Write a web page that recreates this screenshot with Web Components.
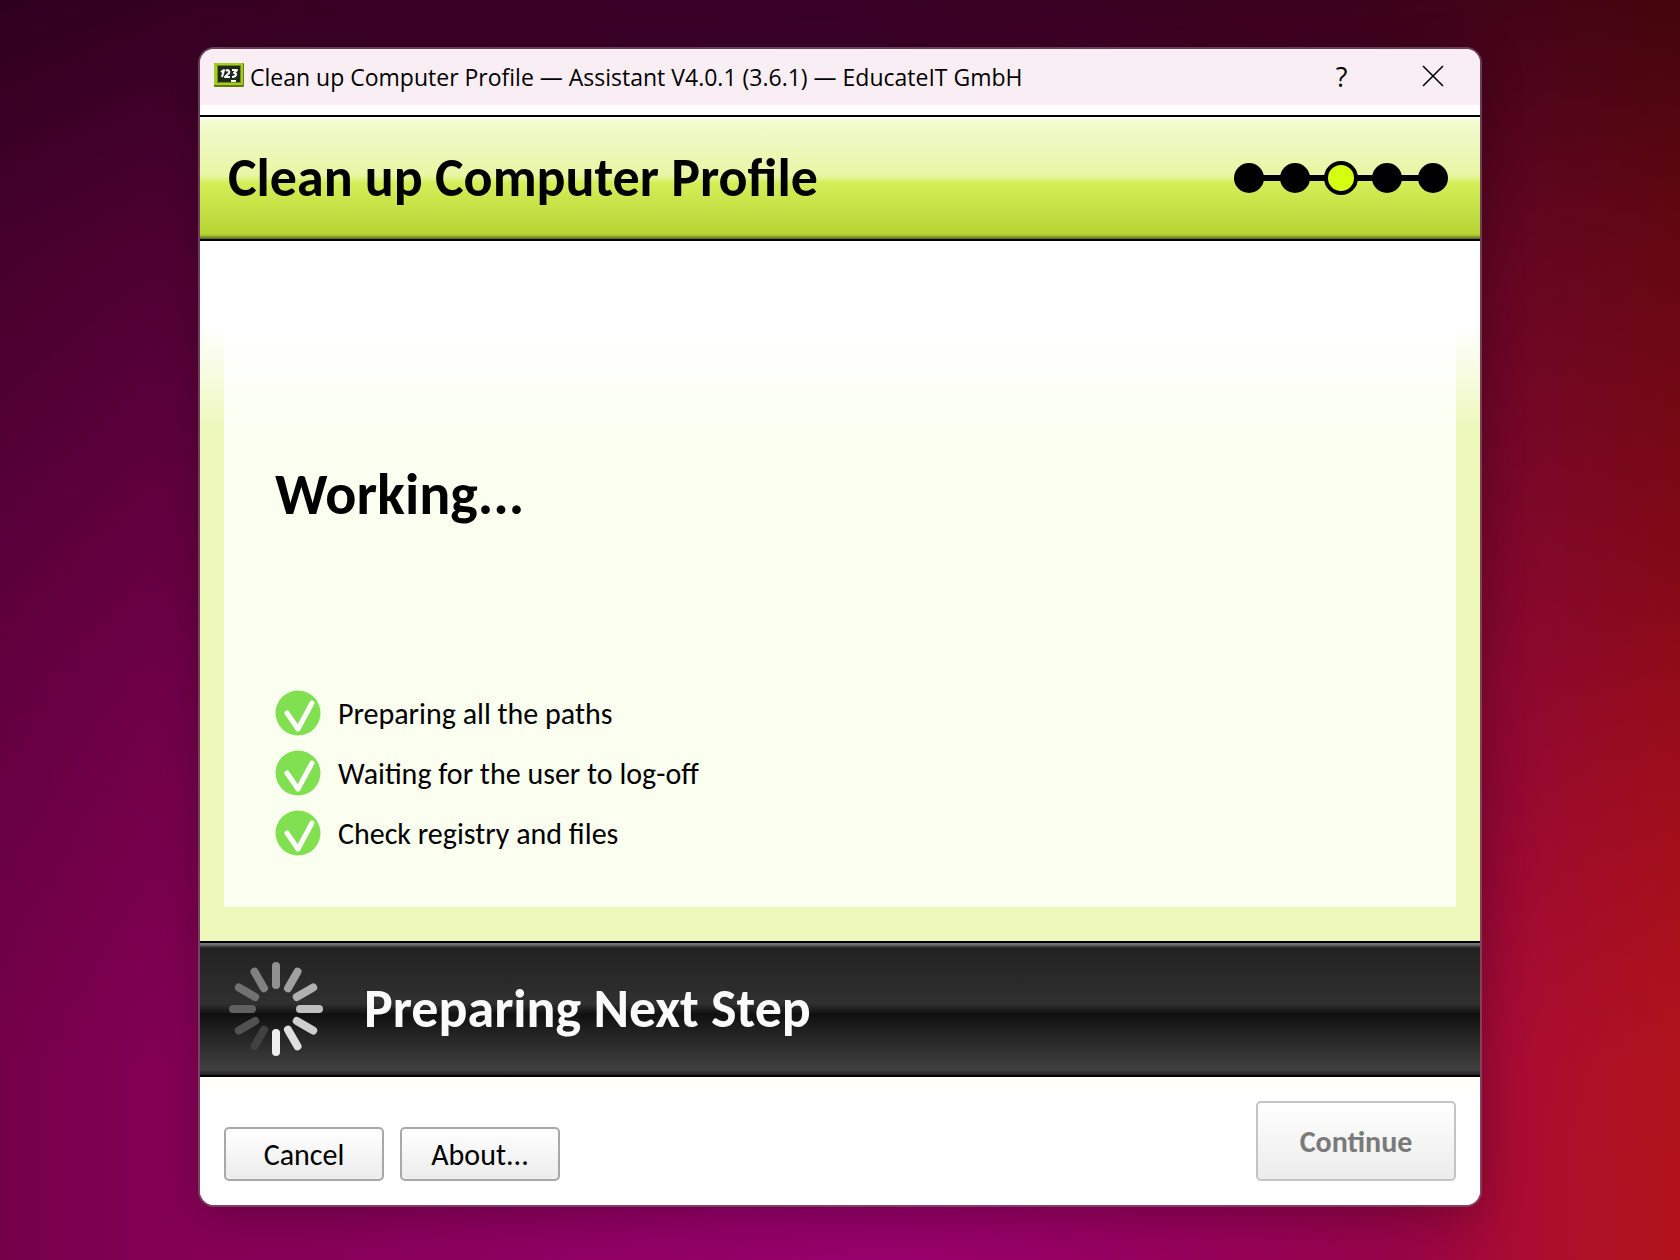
<!DOCTYPE html>
<html lang="en">
<head>
<meta charset="utf-8">
<title>Clean up Computer Profile</title>
<style>
    body {
        margin: 0;
        font-family: Carlito, Lato, "Open Sans", sans-serif;
        color: #000;
    }
</style>
</head>
<body>
<app-desktop>
    <assistant-window>
        <title-bar slot="title">Clean up Computer Profile — Assistant V4.0.1 (3.6.1) — EducateIT GmbH</title-bar>
        <page-header slot="header">
            Clean up Computer Profile
            <step-dots slot="steps" total="5" current="3"></step-dots>
        </page-header>
        <work-panel heading="Working...">
            <task-item>Preparing all the paths</task-item>
            <task-item>Waiting for the user to log-off</task-item>
            <task-item>Check registry and files</task-item>
        </work-panel>
        <busy-bar slot="status">Preparing Next Step</busy-bar>
        <button-row slot="footer">
            <push-button>Cancel</push-button>
            <push-button>About...</push-button>
            <push-button slot="primary" primary disabled>Continue</push-button>
        </button-row>
    </assistant-window>
</app-desktop>

<script>
class AppDesktop extends HTMLElement {
    constructor() {
        super();
        this.attachShadow({mode: 'open'});
    }

    connectedCallback() {
        this.shadowRoot.innerHTML = `
            <style>
                :host {
                    display: flex;
                    box-sizing: border-box;
                    min-height: 100vh;
                    padding: 47px 198px 53px;
                    background:
                        radial-gradient(ellipse 34% 14% at 54% 100%, rgba(156, 0, 112, 0.7), transparent),
                        radial-gradient(ellipse 16% 50% at 102% 96%, rgba(184, 24, 28, 0.7), transparent),
                        linear-gradient(to bottom, rgba(0, 0, 0, 0.6), rgba(0, 0, 0, 0.4) 20%, rgba(0, 0, 0, 0.15) 55%, transparent 85%),
                        linear-gradient(to right, #74004a, #860056 12%, #8c0060 50%, #940444 82%, #a80a34 92%, #a80c1c);
                }
            </style>
            <slot></slot>
        `;
    }
}
customElements.define('app-desktop', AppDesktop);

class AssistantWindow extends HTMLElement {
    constructor() {
        super();
        this.attachShadow({mode: 'open'});
    }

    connectedCallback() {
        this.shadowRoot.innerHTML = `
            <style>
                :host {
                    display: flex;
                    flex-direction: column;
                    flex: 1;
                    min-width: 0;
                    border: 2px solid rgba(128, 96, 112, 0.65);
                    border-radius: 16px;
                    overflow: hidden;
                    background: #fff;
                    background-clip: padding-box;
                    box-shadow: 0 8px 40px rgba(0, 0, 0, 0.25);
                }

                main {
                    display: flex;
                    flex: 1;
                }
            </style>
            <slot name="title"></slot>
            <slot name="header"></slot>
            <main><slot></slot></main>
            <slot name="status"></slot>
            <slot name="footer"></slot>
        `;
    }
}
customElements.define('assistant-window', AssistantWindow);

class TitleBar extends HTMLElement {
    constructor() {
        super();
        this.attachShadow({mode: 'open'});
    }

    connectedCallback() {
        this.shadowRoot.innerHTML = `
            <style>
                :host {
                    display: flex;
                    align-items: center;
                    height: 56px;
                    padding: 0 2px 0 14px;
                    background: #f8eef4;
                    font-family: "Segoe UI", "Open Sans", sans-serif;
                    font-size: 23px;
                }

                .logo {
                    width: 30px;
                    height: 24px;
                    margin: 0 6px 4px 0;
                }

                .texto {
                    flex: 1;
                    white-space: nowrap;
                }

                button {
                    display: flex;
                    align-items: center;
                    justify-content: center;
                    width: 91px;
                    height: 56px;
                    padding: 0 0 2px;
                    border: 0;
                    background: none;
                    color: #000;
                    font: inherit;
                    font-size: 27px;
                }
            </style>
            <svg class="logo" viewBox="0 0 30 24" aria-hidden="true">
                <rect width="30" height="24" rx="1" fill="#5f7c10"/>
                <rect width="29" height="22" rx="1" fill="#a8cc22"/>
                <rect x="3" y="2" width="24" height="18" fill="#6c8a18"/>
                <rect x="4" y="3" width="22" height="16" fill="#1e2a1c"/>
                <path d="M7 9l3-2-2 7M12 8c2-2 4 0 3 2l-4 4h5M18 7h5l-3 3c4 0 2 4-2 4" fill="none" stroke="#fff" stroke-width="2" stroke-linejoin="round"/>
                <path d="M17 18h5" stroke="#fff" stroke-width="2"/>
            </svg>
            <span class="texto"><slot></slot></span>
            <button type="button" aria-label="Help">?</button>
            <button type="button" aria-label="Close">
                <svg width="22" height="22" viewBox="0 0 22 22"><path d="M1 1l20 20M21 1L1 21" stroke="#000" stroke-width="1.6"/></svg>
            </button>
        `;
    }
}
customElements.define('title-bar', TitleBar);

class PageHeader extends HTMLElement {
    constructor() {
        super();
        this.attachShadow({mode: 'open'});
    }

    connectedCallback() {
        this.shadowRoot.innerHTML = `
            <style>
                :host {
                    display: flex;
                    align-items: center;
                    justify-content: space-between;
                    box-sizing: border-box;
                    height: 126px;
                    margin-top: 10px;
                    padding: 0 32px 0 28px;
                    border-top: 2px solid #000;
                    border-bottom: 2px solid #000;
                    background: linear-gradient(to bottom, #fcfff0, #f2fad0 4%, #e8f6a4 48%, #d4ee58 54%, #b6d432 96%, #8ca426 98%, #54621a);
                }

                h1 {
                    margin: 0;
                    font-size: 54px;
                    line-height: 60px;
                }
            </style>
            <h1><slot></slot></h1>
            <slot name="steps"></slot>
        `;
    }
}
customElements.define('page-header', PageHeader);

class StepDots extends HTMLElement {
    constructor() {
        super();
        this.attachShadow({mode: 'open'});
    }

    connectedCallback() {
        const total = Number(this.getAttribute('total')) || 1;
        const current = Number(this.getAttribute('current')) || 1;

        let dots = '';
        for (let i = 1; i <= total; i++) {
            const cx = 15 + (i - 1) * 46;
            if (i === current) {
                dots += `<circle cx="${cx}" cy="17" r="15" fill="#d4ff10" stroke="#000" stroke-width="4"/>`;
            } else {
                dots += `<circle cx="${cx}" cy="17" r="15"/>`;
            }
        }
        const width = 30 + (total - 1) * 46;

        this.shadowRoot.innerHTML = `
            <style>
                :host {
                    display: flex;
                }
            </style>
            <svg width="${width}" height="34" viewBox="0 0 ${width} 34" role="img" aria-label="Step ${current} of ${total}">
                <path d="M15 17H${width - 15}" stroke="#000" stroke-width="6"/>
                ${dots}
            </svg>
        `;
    }
}
customElements.define('step-dots', StepDots);

class WorkPanel extends HTMLElement {
    constructor() {
        super();
        this.attachShadow({mode: 'open'});
    }

    connectedCallback() {
        const heading = this.getAttribute('heading') || '';

        this.shadowRoot.innerHTML = `
            <style>
                :host {
                    display: flex;
                    flex: 1;
                    padding: 0 24px 34px;
                    background: linear-gradient(to bottom, #fff 84px, #edf8ba 190px);
                }

                section {
                    display: flex;
                    flex: 1;
                    flex-direction: column;
                    justify-content: space-between;
                    padding: 222px 51px 44px;
                    background: linear-gradient(to bottom, #fff 90px, #fbfff0 200px);
                }

                h2 {
                    margin: 0;
                    font-size: 58px;
                    line-height: 64px;
                }

                .lista {
                    display: flex;
                    flex-direction: column;
                }
            </style>
            <section>
                <h2>${heading}</h2>
                <div class="lista"><slot></slot></div>
            </section>
        `;
    }
}
customElements.define('work-panel', WorkPanel);

class TaskItem extends HTMLElement {
    constructor() {
        super();
        this.attachShadow({mode: 'open'});
    }

    connectedCallback() {
        this.shadowRoot.innerHTML = `
            <style>
                :host {
                    display: flex;
                    align-items: center;
                    gap: 17px;
                    height: 60px;
                    font-size: 30px;
                }
            </style>
            <svg width="46" height="46" viewBox="0 0 46 46" aria-hidden="true">
                <circle cx="23" cy="23" r="22.5" fill="#80e050"/>
                <path d="M12 23L23 39L37 13" fill="none" stroke="#fff" stroke-width="5" stroke-linecap="round" stroke-linejoin="round"/>
            </svg>
            <span><slot></slot></span>
        `;
    }
}
customElements.define('task-item', TaskItem);

class BusyBar extends HTMLElement {
    constructor() {
        super();
        this.attachShadow({mode: 'open'});
    }

    connectedCallback() {
        // one colour for each spoke, clockwise from the top
        const tones = ['#919191', '#a0a0a0', '#b0b0b0', '#bfbfbf', '#cfcfcf', '#dfdfdf',
            '#efefef', '#414141', '#515151', '#616161', '#717171', '#818181'];
        const spokes = tones.map((tone, i) =>
            `<path d="M47 4V23" stroke="${tone}" transform="rotate(${i * 30} 47 47)"/>`).join('');

        this.shadowRoot.innerHTML = `
            <style>
                :host {
                    display: flex;
                    align-items: center;
                    gap: 41px;
                    box-sizing: border-box;
                    height: 136px;
                    padding: 0 29px;
                    border-top: 2px solid #000;
                    border-bottom: 2px solid #000;
                    background: linear-gradient(to bottom, #7c7c7c, #666 2px, #222 5px, #303030 46%, #101010 54%, #222 68%, #404040 96%, #222);
                    color: #fafafa;
                    font-size: 54px;
                    font-weight: bold;
                    line-height: 60px;
                }
            </style>
            <svg width="94" height="94" viewBox="0 0 94 94" stroke-width="8" stroke-linecap="round" aria-hidden="true">${spokes}</svg>
            <span role="status"><slot></slot></span>
        `;
    }
}
customElements.define('busy-bar', BusyBar);

class ButtonRow extends HTMLElement {
    constructor() {
        super();
        this.attachShadow({mode: 'open'});
    }

    connectedCallback() {
        this.shadowRoot.innerHTML = `
            <style>
                :host {
                    display: flex;
                    align-items: flex-end;
                    justify-content: space-between;
                    padding: 24px;
                    background: linear-gradient(to bottom, #fffff6, #fff 20px);
                }

                div {
                    display: flex;
                    gap: 16px;
                }
            </style>
            <div><slot></slot></div>
            <slot name="primary"></slot>
        `;
    }
}
customElements.define('button-row', ButtonRow);

class PushButton extends HTMLElement {
    constructor() {
        super();
        this.attachShadow({mode: 'open'});
    }

    connectedCallback() {
        const disabled = this.hasAttribute('disabled') ? 'disabled' : '';

        this.shadowRoot.innerHTML = `
            <style>
                :host {
                    display: block;
                }

                button {
                    min-width: 160px;
                    height: 54px;
                    padding: 0 16px;
                    border: 2px solid #a8a8a8;
                    border-radius: 5px;
                    background: linear-gradient(to bottom, #fff, #ececec);
                    color: #000;
                    font: inherit;
                    font-size: 30px;
                }

                :host([primary]) button {
                    min-width: 200px;
                    height: 80px;
                    font-weight: bold;
                }

                button:disabled {
                    border-color: #c4c4c4;
                    color: #7a7a7a;
                }
            </style>
            <button type="button" ${disabled}><slot></slot></button>
        `;
    }
}
customElements.define('push-button', PushButton);
</script>
</body>
</html>
